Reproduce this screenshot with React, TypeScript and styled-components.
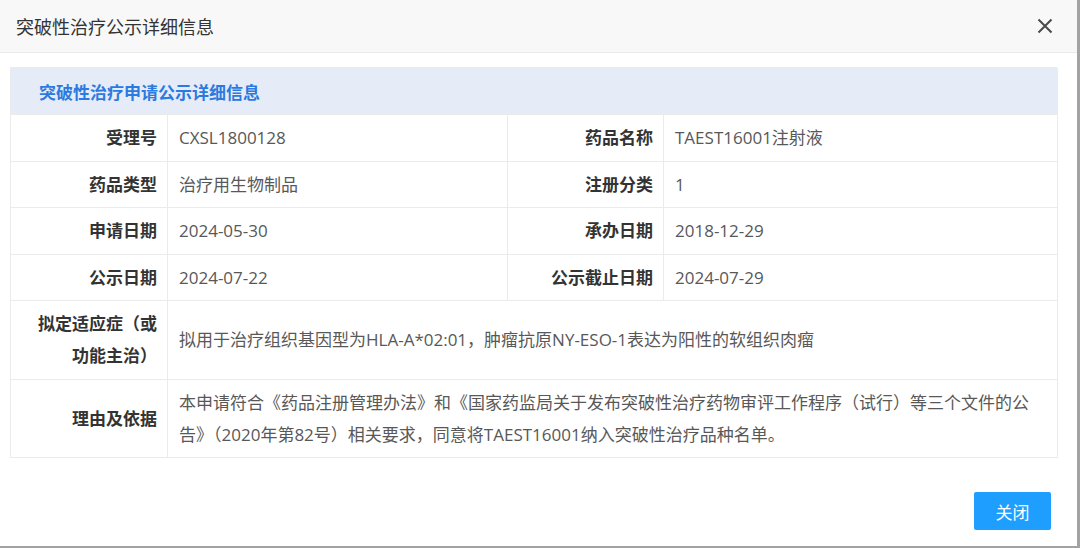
import React from 'react';
import styled, { createGlobalStyle } from 'styled-components';

const GlobalStyle = createGlobalStyle`
  html, body {
    margin: 0;
    padding: 0;
    background: #a3a3a3;
    width: 1080px;
    height: 548px;
    overflow: hidden;
  }
  body {
    font-family: "Open Sans", "Noto Sans CJK SC", sans-serif;
  }
`;

const Dialog = styled.div`
  display: flex;
  flex-direction: column;
  width: 1077px;
  height: 546px;
  background: #fff;
`;

const TitleBar = styled.div`
  display: flex;
  align-items: center;
  justify-content: space-between;
  height: 53px;
  padding: 0 23px 0 16px;
  background: #f8f8f8;
  border-bottom: 1px solid #eaeaea;
  box-sizing: border-box;
  font-size: 18px;
  color: #333;
`;

const CloseBtn = styled.button`
  border: 0;
  background: none;
  padding: 0;
  width: 18px;
  height: 18px;
  display: flex;
  align-items: center;
  justify-content: center;
  cursor: pointer;
`;

const Body = styled.div`
  flex: 1;
  display: flex;
  flex-direction: column;
  padding: 14px 20px 0 10px;
`;

const Table = styled.div`
  display: grid;
  grid-template-columns: 157px 340px 156px 394px;
  border-left: 1px solid #ebebeb;
  border-top: 1px solid #ebebeb;
  font-size: 17px;
`;

const SectionHead = styled.div`
  grid-column: 1 / -1;
  height: 46px;
  display: flex;
  align-items: center;
  padding-left: 28px;
  background: #e5ecf8;
  color: #2b7ae0;
  font-weight: bold;
  border-right: 1px solid #ebebeb;
  border-bottom: 1px solid #ebebeb;
`;

const Cell = styled.div`
  display: flex;
  align-items: center;
  box-sizing: border-box;
  min-height: 46.5px;
  padding-top: 7px;
  padding-bottom: 6.5px;
  line-height: 32px;
  border-right: 1px solid #ebebeb;
  border-bottom: 1px solid #ebebeb;
`;

const Label = styled(Cell)`
  justify-content: flex-end;
  text-align: right;
  padding-left: 12px;
  padding-right: 10px;
  font-weight: bold;
  color: #333;
`;

const Value = styled(Cell)<{ $span?: boolean }>`
  padding-left: 11px;
  padding-right: 16px;
  color: #585858;
  grid-column: ${p => (p.$span ? '2 / -1' : 'auto')};
`;

const Footer = styled.div`
  display: flex;
  justify-content: flex-end;
  padding: 34px 6px 0 0;
`;

const PrimaryBtn = styled.button`
  width: 77px;
  height: 38px;
  border: 0;
  border-radius: 2px;
  background: #1e9fff;
  color: #fff;
  font-size: 17px;
  font-family: inherit;
  cursor: pointer;
`;

const rows: [string, string, string, string][] = [
  ['受理号', 'CXSL1800128', '药品名称', 'TAEST16001注射液'],
  ['药品类型', '治疗用生物制品', '注册分类', '1'],
  ['申请日期', '2024-05-30', '承办日期', '2018-12-29'],
  ['公示日期', '2024-07-22', '公示截止日期', '2024-07-29'],
];

export default function App() {
  return (
    <>
      <GlobalStyle />
      <Dialog>
        <TitleBar>
          <span>突破性治疗公示详细信息</span>
          <CloseBtn aria-label="close">
            <svg width="16" height="16" viewBox="0 0 16 16">
              <path d="M1.5 1.5 L14.5 14.5 M14.5 1.5 L1.5 14.5" stroke="#4a4a4a" strokeWidth="2" />
            </svg>
          </CloseBtn>
        </TitleBar>
        <Body>
          <Table>
            <SectionHead>突破性治疗申请公示详细信息</SectionHead>
            {rows.map(r => (
              <React.Fragment key={r[0]}>
                <Label>{r[0]}</Label>
                <Value>{r[1]}</Value>
                <Label>{r[2]}</Label>
                <Value>{r[3]}</Value>
              </React.Fragment>
            ))}
            <Label>拟定适应症（或功能主治）</Label>
            <Value $span>拟用于治疗组织基因型为HLA-A*02:01，肿瘤抗原NY-ESO-1表达为阳性的软组织肉瘤</Value>
            <Label>理由及依据</Label>
            <Value $span>
              本申请符合《药品注册管理办法》和《国家药监局关于发布突破性治疗药物审评工作程序（试行）等三个文件的公告》（2020年第82号）相关要求，同意将TAEST16001纳入突破性治疗品种名单。
            </Value>
          </Table>
          <Footer>
            <PrimaryBtn>关闭</PrimaryBtn>
          </Footer>
        </Body>
      </Dialog>
    </>
  );
}
